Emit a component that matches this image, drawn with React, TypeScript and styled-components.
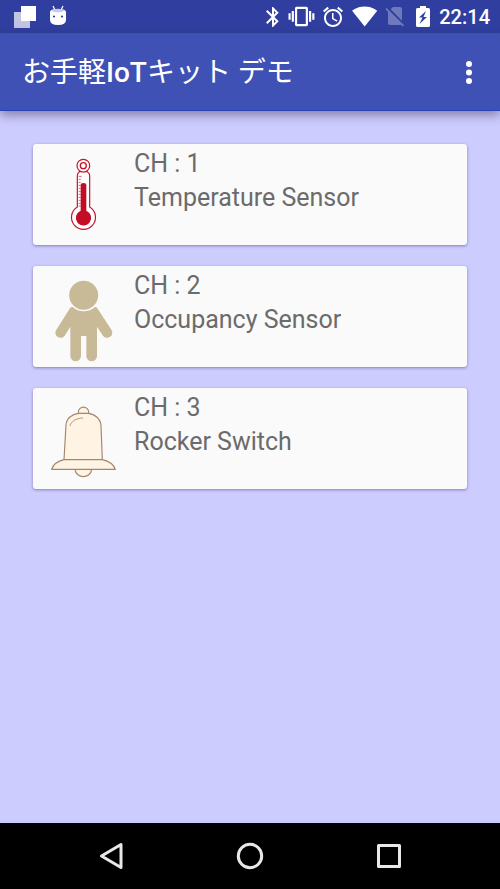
import React from "react";
import styled, { createGlobalStyle } from "styled-components";

const GlobalStyle = createGlobalStyle`
  *, *::before, *::after { box-sizing: border-box; }
  body {
    margin: 0;
    background: #ccccff;
    font-family: Roboto, "Noto Sans CJK JP", sans-serif;
  }
`;

const Screen = styled.div`
  display: flex;
  flex-direction: column;
  min-height: 100vh;
`;

const StatusBar = styled.header`
  display: flex;
  align-items: center;
  justify-content: space-between;
  height: 33px;
  padding: 0 10px;
  background: #303f9f;
  color: #fff;
`;

const StatusGroup = styled.div`
  display: flex;
  align-items: center;
`;

const StatusIcon = styled.svg<{ $faded?: boolean }>`
  display: block;
  width: 30px;
  height: 33px;
  fill: currentColor;
  opacity: ${({ $faded }) => ($faded ? 0.3 : 1)};
`;

const Clock = styled.time`
  margin-left: 1px;
  padding-top: 1px;
  font-size: 20px;
  font-weight: 500;
  line-height: 32px;
`;

const AppBar = styled.div`
  position: relative;
  display: flex;
  align-items: center;
  justify-content: space-between;
  height: 78px;
  padding: 0 16px 0 22px;
  background: #3f51b5;
  border-bottom: 1px solid #2c44b2;
  box-shadow: 0 4px 10px rgba(40, 30, 60, 0.45);
  color: #fff;
`;

const Title = styled.h1`
  margin: 0;
  padding-top: 2px;
  font-size: 28px;
  font-weight: 400;
  line-height: 40px;
  white-space: nowrap;
`;

const Latin = styled.span`
  font-weight: 500;
`;

const MenuButton = styled.button`
  display: flex;
  padding: 0;
  border: 0;
  background: none;
  color: inherit;
  cursor: pointer;

  svg {
    width: 30px;
    height: 40px;
    fill: currentColor;
  }
`;

const SensorList = styled.ul`
  display: flex;
  flex: 1;
  flex-direction: column;
  gap: 21px;
  margin: 0;
  padding: 33px;
  list-style: none;
`;

const SensorCard = styled.li`
  display: grid;
  grid-template-columns: 100px 1fr;
  background: #fafafa;
  border-radius: 3px;
  box-shadow: 0 1px 3px rgba(40, 30, 90, 0.45);
`;

const SensorPicture = styled.svg`
  display: block;
  width: 100px;
  height: 101px;
`;

const SensorText = styled.div`
  padding: 3px 0 0 1px;
  color: #6b6b6b;
  font-size: 25px;
  line-height: 34px;
`;

const Channel = styled.div``;

const SensorName = styled.div``;

const NavBar = styled.nav`
  display: grid;
  grid-template-columns: repeat(3, 1fr);
  height: 66px;
  padding: 0 42px;
  background: #000;
`;

const NavButton = styled.button`
  display: flex;
  align-items: center;
  justify-content: center;
  padding: 0;
  border: 0;
  background: none;
  color: #e8e8e8;
  cursor: pointer;

  svg {
    width: 32px;
    height: 32px;
    fill: none;
    stroke: currentColor;
    stroke-width: 3;
    stroke-linejoin: round;
  }
`;

const Thermometer = () => (
  <SensorPicture viewBox="24 27 300 303" aria-hidden="true">
    <g fill="none" stroke="#c8102a" strokeWidth="3.5">
      <path d="M157 216V122q0-8 6-12h24q7 4 7 12v94a36 36 0 1 1-37 0z" fill="#fff" />
      <circle cx="175" cy="92" r="19" fill="#fff" />
      <circle cx="175" cy="92" r="9" strokeWidth="4" />
      <path
        d="M161 124h9M161 133h6M161 142h6M161 151h6M161 160h6M161 169h6M161 178h6M161 187h6M161 196h6M161 205h6M161 213h6"
        strokeWidth="2"
      />
    </g>
    <path d="M167 150q0-6 8.500-6t8.500 6v77a23 23 0 1 1-17 0z" fill="#c40d25" />
  </SensorPicture>
);

const Person = () => (
  <SensorPicture viewBox="24 27 300 303" fill="#c9ba97" aria-hidden="true">
    <circle cx="176" cy="115" r="43.500" />
    <path d="M143 150Q158 163 176 163Q195 163 210 150Q214 149 217 154L259 218A15 15 0 0 1 234 236L216 209V297a16 16 0 0 1-32 0V237h-16v60a16 16 0 0 1-32 0V209L119 236A15 15 0 0 1 94 218L135 154Q138 149 143 150z" />
  </SensorPicture>
);

const Bell = () => (
  <SensorPicture
    viewBox="24 24 300 303"
    fill="#fff4e4"
    stroke="#a2876f"
    strokeWidth="3.5"
    strokeLinejoin="round"
    strokeLinecap="round"
    aria-hidden="true"
  >
    <path d="M150 268C153 297 197 297 200 268z" />
    <path d="M160 103V96a15 14 0 0 1 31 0v7z" />
    <path d="M117 239L123 135C124 115 143 101 162 100H190C210 102 227 117 228 137L232 239z" />
    <path d="M117 239C100 243 85 253 80 268H271C265 252 250 243 232 239z" />
    <path d="M135 137C139 122 155 115 173 114" fill="none" strokeWidth="2.5" />
  </SensorPicture>
);

const sensors = [
  { channel: 1, name: "Temperature Sensor", Picture: Thermometer },
  { channel: 2, name: "Occupancy Sensor", Picture: Person },
  { channel: 3, name: "Rocker Switch", Picture: Bell },
];

export default function App() {
  return (
    <Screen>
      <GlobalStyle />
      <StatusBar>
        <StatusGroup>
          <StatusIcon viewBox="10 0 30 33" aria-hidden="true">
            <path d="M14 12h16v16H14z" opacity=".7" />
            <path d="M21 6h15v15H21z" />
          </StatusIcon>
          <StatusIcon viewBox="40 0 30 33" aria-hidden="true">
            <path d="M53 6l2 4M63 6l-2 4" stroke="currentColor" strokeWidth="1.2" />
            <path d="M50 12q0-3 8-3t8 3v8q0 5-8 5t-8-5z" />
            <ellipse cx="58" cy="10.500" rx="6" ry="1.700" fill="#c5cae9" />
            <circle cx="54" cy="16.500" r="1.100" fill="#303f9f" />
            <circle cx="62" cy="16.500" r="1.100" fill="#303f9f" />
          </StatusIcon>
        </StatusGroup>
        <StatusGroup>
          <StatusIcon viewBox="-3 -5 30 33" aria-label="Bluetooth">
            <path d="M17.710 7.710 12 2h-1v7.590L6.410 5 5 6.410 10.590 12 5 17.590 6.410 19 11 14.410V22h1l5.710-5.710-4.300-4.290 4.300-4.290zM13 5.830l1.880 1.880L13 9.590V5.830zm1.880 10.460L13 18.170v-3.760l1.880 1.880z" />
          </StatusIcon>
          <StatusIcon viewBox="0 0 30 33" aria-label="Vibrate">
            <path
              transform="translate(.5 3.500) scale(1.080)"
              d="M0 15h2V9H0v6zm3 2h2V7H3v10zm19-8v6h2V9h-2zm-3 8h2V7h-2v10zM16.500 3h-9C6.670 3 6 3.670 6 4.500v15c0 .83.67 1.500 1.500 1.500h9c.83 0 1.500-.67 1.500-1.500v-15c0-.83-.67-1.500-1.500-1.500zM16 19H8V5h8v14z"
            />
          </StatusIcon>
          <StatusIcon viewBox="-3 -5 30 33" aria-label="Alarm">
            <path d="M22 5.720l-4.600-3.860-1.290 1.530 4.600 3.860L22 5.720zM7.880 3.390L6.600 1.860 2 5.710l1.290 1.530 4.590-3.850zM12.500 8H11v6l4.750 2.850.75-1.230-4-2.370V8zM12 4c-4.970 0-9 4.030-9 9s4.020 9 9 9c4.970 0 9-4.030 9-9s-4.030-9-9-9zm0 16c-3.870 0-7-3.130-7-7s3.130-7 7-7 7 3.130 7 7-3.130 7-7 7z" />
          </StatusIcon>
          <StatusIcon viewBox="0 0 30 33" aria-label="Wi-Fi">
            <path
              transform="translate(3.700 3.200) scale(1.080)"
              d="M12.010 21.490L23.640 7c-.45-.34-4.930-4-11.640-4C5.280 3 .81 6.660.36 7l11.630 14.490.01.01.01-.01z"
            />
          </StatusIcon>
          <StatusIcon $faded viewBox="-5 -4 30 33" aria-label="No SIM">
            <path d="M18.990 5c0-1.100-.89-2-1.990-2h-7L7.660 5.340 19 16.680 18.990 5zM3.650 3.880L2.380 5.150 5 7.770V19c0 1.100.9 2 2 2h10.010c.35 0 .67-.1.96-.26l1.880 1.880 1.270-1.270L3.650 3.880z" />
          </StatusIcon>
          <StatusIcon viewBox="408 0 30 33" aria-label="Battery charging">
            <path d="M420 6h6v2h2.500q1.500 0 1.500 1.500v16q0 1.500-1.500 1.500h-11q-1.500 0-1.500-1.500v-16q0-1.500 1.500-1.500h2.500z" />
            <path d="M426 11l-7 6.500h3.500L419.500 24l7.500-7h-3.500z" fill="#303f9f" />
          </StatusIcon>
          <Clock>22:14</Clock>
        </StatusGroup>
      </StatusBar>
      <AppBar>
        <Title>
          お手軽<Latin>IoT</Latin>キット デモ
        </Title>
        <MenuButton type="button" aria-label="More options">
          <svg viewBox="0 0 30 40" aria-hidden="true">
            <circle cx="15" cy="12" r="3" />
            <circle cx="15" cy="20.500" r="3" />
            <circle cx="15" cy="29" r="3" />
          </svg>
        </MenuButton>
      </AppBar>
      <SensorList>
        {sensors.map(({ channel, name, Picture }) => (
          <SensorCard key={channel}>
            <Picture />
            <SensorText>
              <Channel>CH : {channel}</Channel>
              <SensorName>{name}</SensorName>
            </SensorText>
          </SensorCard>
        ))}
      </SensorList>
      <NavBar aria-label="System">
        <NavButton type="button" aria-label="Back">
          <svg viewBox="0 0 32 32" aria-hidden="true">
            <path d="M6.500 16L26 4.500v23z" />
          </svg>
        </NavButton>
        <NavButton type="button" aria-label="Home">
          <svg viewBox="0 0 32 32" aria-hidden="true">
            <circle cx="16" cy="16" r="11.700" />
          </svg>
        </NavButton>
        <NavButton type="button" aria-label="Overview">
          <svg viewBox="0 0 32 32" aria-hidden="true">
            <rect x="5.500" y="5.500" width="21" height="21" />
          </svg>
        </NavButton>
      </NavBar>
    </Screen>
  );
}
